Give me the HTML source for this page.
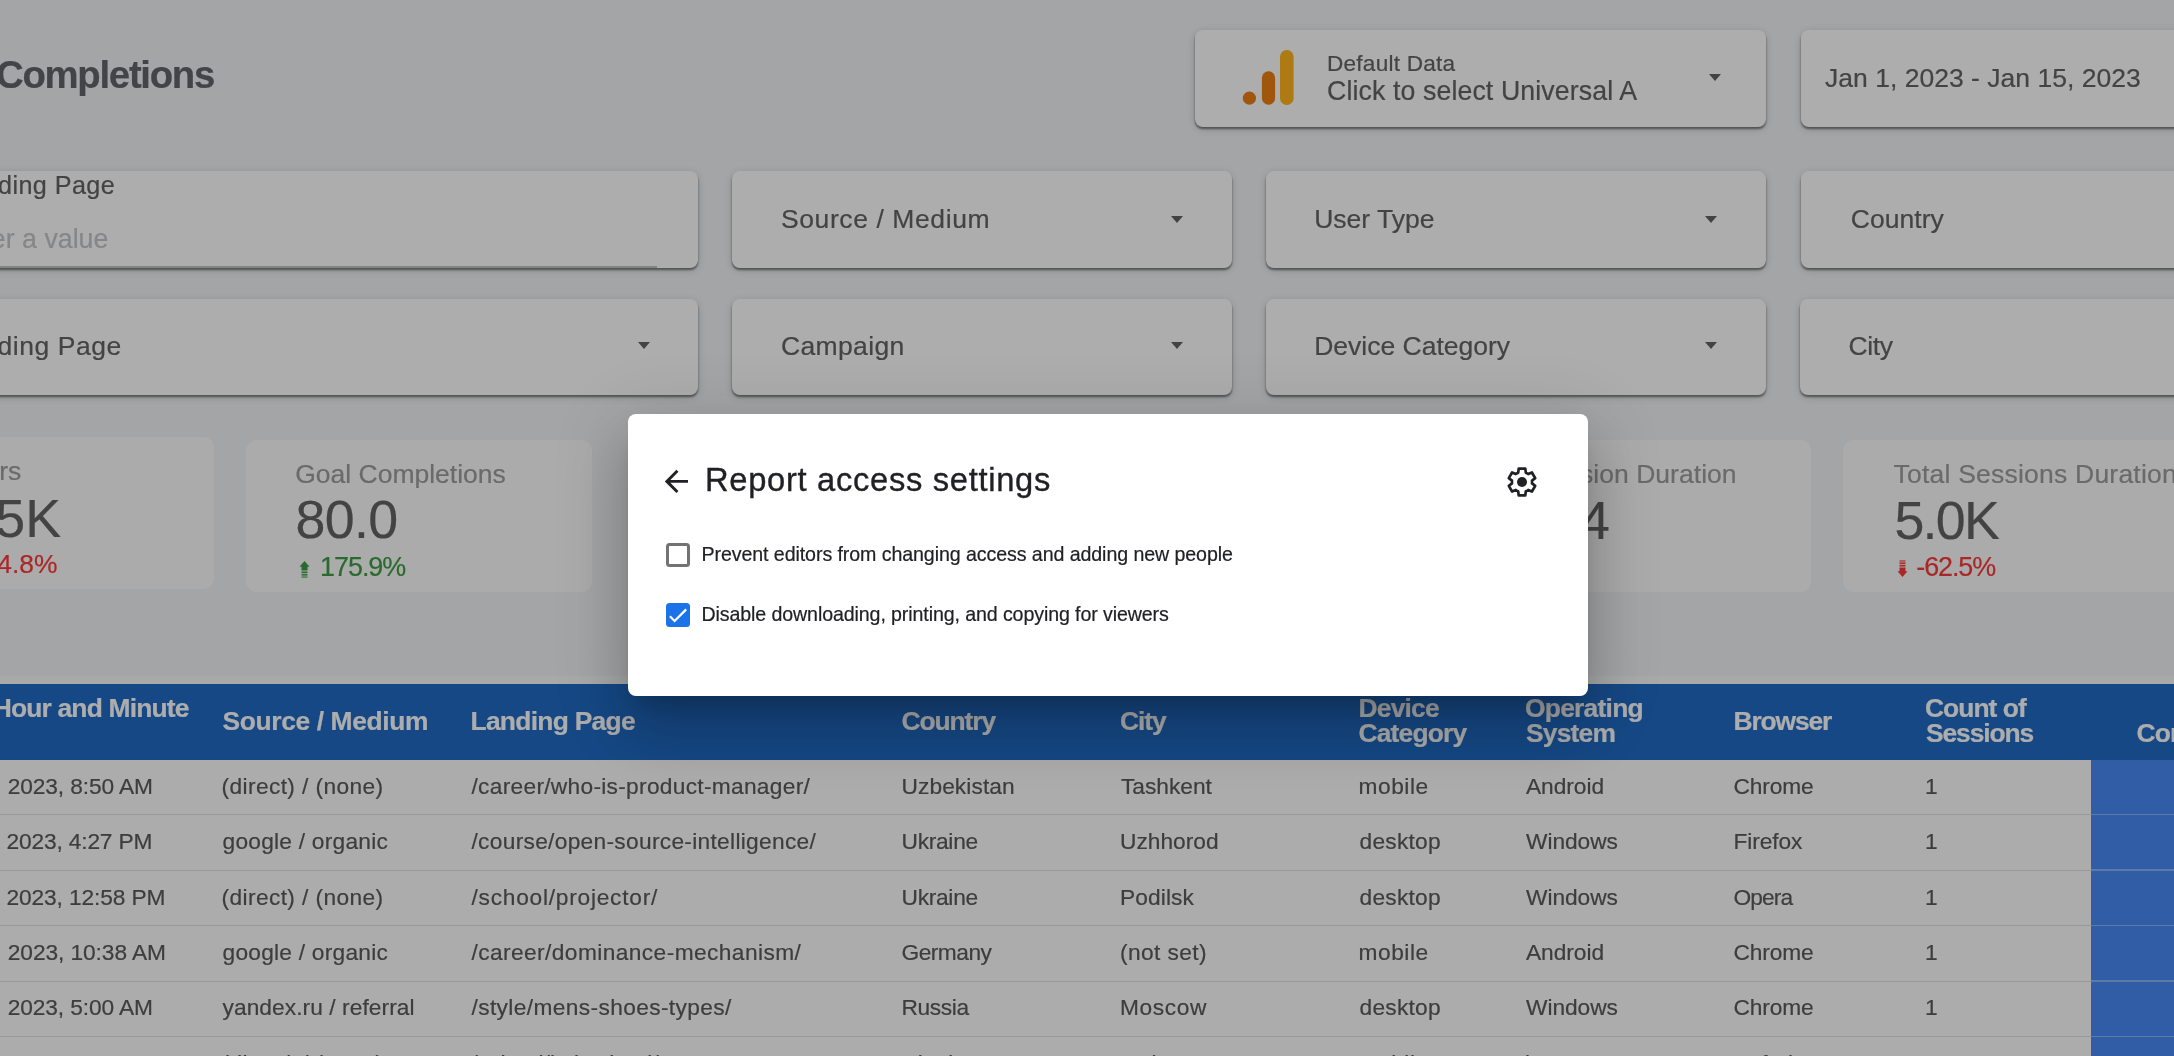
<!DOCTYPE html>
<html lang="en">
<head>
<meta charset="utf-8">
<title>Report access settings</title>
<style>
html,body{margin:0;padding:0;}
body{width:2174px;height:1056px;overflow:hidden;position:relative;background:#f2f4f6;font-family:"Liberation Sans", sans-serif;}
#page,#scrim,#dlgwrap{position:absolute;left:0;top:0;width:2174px;height:1056px;overflow:hidden;}
#page,#dlgwrap{will-change:transform;}
#scrim{background:rgba(0,0,0,0.32);}
.t{position:absolute;white-space:pre;display:block;-webkit-text-stroke:0.2px currentColor;}
.card{position:absolute;background:#ffffff;border-radius:8px;box-shadow:0 2.5px 2px -.5px rgba(0,0,0,.32),0 2px 3px 0 rgba(0,0,0,.2),0 2px 10px 0 rgba(0,0,0,.16);}
.kpi{position:absolute;background:#fdfdfd;border-radius:11px;}
.dd{position:absolute;width:0;height:0;border-left:6.6px solid transparent;border-right:6.6px solid transparent;border-top:7.2px solid #646464;}
.sep{position:absolute;left:0;width:2174px;height:1px;background:#e2e2e2;}
#tbl{position:absolute;left:-40px;top:676px;width:2300px;height:500px;background:linear-gradient(#f8f9f9 0,#f8f9f9 8.5px,#fefefe 8.5px);}
#thead{position:absolute;left:0;top:684.25px;width:2174px;height:75.25px;background:#1f6bc4;}
#barcol{position:absolute;left:2091.3px;top:759.5px;width:100px;height:300px;background:#4889f5;}
.bsep{position:absolute;left:2091.3px;width:100px;height:1.5px;background:#8db4f7;}
#dialog{position:absolute;left:628px;top:414.25px;width:960px;height:281.5px;background:#fff;border-radius:8px;
 box-shadow:0 16.5px 22.5px -10.5px rgba(0,0,0,.2),0 36px 57px 4.5px rgba(0,0,0,.14),0 13.5px 69px 12px rgba(0,0,0,.12);}
.cb{position:absolute;box-sizing:border-box;width:24px;height:24px;border-radius:3.5px;}
</style>
</head>
<body>
<div id="page">
  <!-- top controls -->
  <div class="card" style="left:1194.5px;top:29.5px;width:571px;height:97.5px"></div>
  <div class="card" style="left:1800.75px;top:29.5px;width:500px;height:97.5px"></div>
  <!-- GA icon -->
  <svg style="position:absolute;left:1236px;top:44px" width="64" height="66" viewBox="0 0 64 66">
    <circle cx="13.4" cy="54.2" r="6.6" fill="#ee7f14"/>
    <rect x="25.9" y="27.2" width="13.2" height="33.6" rx="6.6" fill="#ee7f14"/>
    <rect x="44" y="6" width="13.6" height="55" rx="6.8" fill="#ffb41e"/>
  </svg>
  <div class="dd" style="left:1709.2px;top:74.3px"></div>

  <!-- filter row 1 -->
  <div class="card" style="left:-302px;top:170.5px;width:1000px;height:97.5px"></div>
  <div style="position:absolute;left:0;top:266px;width:656.5px;height:2px;background:#c2c2c2"></div>
  <div class="card" style="left:732px;top:170.5px;width:500px;height:97.5px"></div>
  <div class="card" style="left:1266px;top:170.5px;width:500px;height:97.5px"></div>
  <div class="card" style="left:1800.5px;top:170.5px;width:500px;height:97.5px"></div>
  <div class="dd" style="left:1171px;top:215.5px"></div>
  <div class="dd" style="left:1705px;top:215.5px"></div>
  <!-- filter row 2 -->
  <div class="card" style="left:-302px;top:298.75px;width:1000px;height:96.5px"></div>
  <div class="card" style="left:732px;top:298.75px;width:500px;height:96.5px"></div>
  <div class="card" style="left:1266px;top:298.75px;width:500px;height:96.5px"></div>
  <div class="card" style="left:1800px;top:298.75px;width:500px;height:96.5px"></div>
  <div class="dd" style="left:637.8px;top:342px"></div>
  <div class="dd" style="left:1171px;top:342px"></div>
  <div class="dd" style="left:1705px;top:342px"></div>

  <!-- KPI cards -->
  <div class="kpi" style="left:-150px;top:437px;width:364px;height:152px"></div>
  <div class="kpi" style="left:245.75px;top:439.5px;width:346px;height:152px"></div>
  <div class="kpi" style="left:1465px;top:440px;width:346px;height:152px"></div>
  <div class="kpi" style="left:1843px;top:440px;width:346px;height:152px"></div>
  <!-- up arrow -->
  <svg style="position:absolute;left:298px;top:560px" width="13" height="19" viewBox="0 0 13 19">
    <g fill="#3e9c44"><path d="M6.5 1 L11.5 6.7 H9.5 V10.6 H3.5 V6.7 H1.5 Z"/><rect x="3.5" y="11.5" width="6" height="1.7"/><rect x="3.5" y="14.1" width="6" height="1.5"/><rect x="3.5" y="16.5" width="6" height="1.1"/></g>
  </svg>
  <!-- down arrow -->
  <svg style="position:absolute;left:1895.5px;top:559px" width="13" height="19" viewBox="0 0 13 19">
    <g fill="#fa3a3a" transform="translate(0 19) scale(1 -1)"><path d="M6.5 1 L11.5 6.7 H9.5 V10.6 H3.5 V6.7 H1.5 Z"/><rect x="3.5" y="11.5" width="6" height="1.7"/><rect x="3.5" y="14.1" width="6" height="1.5"/><rect x="3.5" y="16.5" width="6" height="1.1"/></g>
  </svg>

  <!-- table -->
  <div id="tbl"></div>
  <div id="thead"></div>
  <div class="sep" style="top:814.45px"></div>
<div class="sep" style="top:869.90px"></div>
<div class="sep" style="top:925.35px"></div>
<div class="sep" style="top:980.80px"></div>
<div class="sep" style="top:1036.25px"></div>
<div class="sep" style="top:1091.70px"></div>
  <div id="barcol"></div>
  <div class="bsep" style="top:813.7px"></div>
  <div class="bsep" style="top:869.1px"></div>
  <div class="bsep" style="top:924.6px"></div>
  <div class="bsep" style="top:980px"></div>
  <div class="bsep" style="top:1035.5px"></div>

<span class="t" style="top:50.75px;font-size:38.34px;line-height:47px;color:#62656a;font-weight:700;left:-4.00px;letter-spacing:-1.279px;">Completions</span>
<span class="t" style="top:49.00px;font-size:22.62px;line-height:29px;color:#646464;left:1327.00px;letter-spacing:0.218px;">Default Data</span>
<span class="t" style="top:74.25px;font-size:26.73px;line-height:34px;color:#646464;left:1327.00px;letter-spacing:0.105px;">Click to select Universal A</span>
<span class="t" style="top:60.50px;font-size:26.52px;line-height:34px;color:#646464;left:1825.00px;letter-spacing:0.011px;">Jan 1, 2023 - Jan 15, 2023</span>
<span class="t" style="top:169.25px;font-size:25.19px;line-height:32px;color:#646464;right:2058.83px;letter-spacing:0.414px;">Landing Page</span>
<span class="t" style="top:221.75px;font-size:26.73px;line-height:34px;color:#c4c6c9;right:2065.62px;letter-spacing:0.022px;">Enter a value</span>
<span class="t" style="top:201.85px;font-size:26.52px;line-height:34px;color:#646464;left:781.00px;letter-spacing:0.583px;">Source / Medium</span>
<span class="t" style="top:201.85px;font-size:26.52px;line-height:34px;color:#646464;left:1314.20px;">User Type</span>
<span class="t" style="top:201.85px;font-size:26.52px;line-height:34px;color:#646464;left:1850.80px;letter-spacing:0.019px;">Country</span>
<span class="t" style="top:329.35px;font-size:26.52px;line-height:34px;color:#646464;right:2052.21px;letter-spacing:0.540px;">Landing Page</span>
<span class="t" style="top:329.35px;font-size:26.52px;line-height:34px;color:#646464;left:781.00px;letter-spacing:0.341px;">Campaign</span>
<span class="t" style="top:329.35px;font-size:26.52px;line-height:34px;color:#646464;left:1314.20px;letter-spacing:-0.011px;">Device Category</span>
<span class="t" style="top:329.35px;font-size:26.52px;line-height:34px;color:#646464;left:1848.50px;letter-spacing:-0.386px;">City</span>
<span class="t" style="top:453.75px;font-size:26.52px;line-height:34px;color:#9c9c9c;right:2152.72px;letter-spacing:0.021px;">Users</span>
<span class="t" style="top:485.65px;font-size:53.76px;line-height:64px;color:#646464;right:2112.81px;letter-spacing:0.043px;">1.5K</span>
<span class="t" style="top:546.65px;font-size:26.42px;line-height:34px;color:#fa3a3a;right:2116.50px;letter-spacing:0.021px;">-4.8%</span>
<span class="t" style="top:456.55px;font-size:26.52px;line-height:34px;color:#9c9c9c;left:295.25px;letter-spacing:-0.016px;">Goal Completions</span>
<span class="t" style="top:487.45px;font-size:53.76px;line-height:64px;color:#646464;left:295.50px;letter-spacing:-0.657px;">80.0</span>
<span class="t" style="top:549.85px;font-size:26.93px;line-height:34px;color:#3e9c44;left:320.00px;letter-spacing:-1.014px;">175.9%</span>
<span class="t" style="top:456.65px;font-size:26.52px;line-height:34px;color:#9c9c9c;right:437.43px;letter-spacing:0.021px;">Avg. Session Duration</span>
<span class="t" style="top:487.85px;font-size:53.76px;line-height:64px;color:#646464;right:564.06px;letter-spacing:0.043px;">00:00:34</span>
<span class="t" style="top:456.65px;font-size:26.52px;line-height:34px;color:#9c9c9c;left:1893.60px;letter-spacing:0.209px;">Total Sessions Duration</span>
<span class="t" style="top:487.85px;font-size:53.76px;line-height:64px;color:#646464;left:1894.40px;letter-spacing:-1.707px;">5.0K</span>
<span class="t" style="top:550.15px;font-size:26.93px;line-height:34px;color:#fa3a3a;left:1916.30px;letter-spacing:-1.093px;">-62.5%</span>
<span class="t" style="top:690.85px;font-size:26.42px;line-height:34px;color:#ffffff;font-weight:700;right:1985.39px;letter-spacing:-0.824px;">Date Hour and Minute</span>
<span class="t" style="top:703.95px;font-size:26.42px;line-height:34px;color:#ffffff;font-weight:700;left:222.50px;letter-spacing:-0.379px;">Source / Medium</span>
<span class="t" style="top:703.95px;font-size:26.42px;line-height:34px;color:#ffffff;font-weight:700;left:470.50px;letter-spacing:-0.722px;">Landing Page</span>
<span class="t" style="top:703.95px;font-size:26.42px;line-height:34px;color:#ffffff;font-weight:700;left:901.50px;letter-spacing:-1.088px;">Country</span>
<span class="t" style="top:703.95px;font-size:26.42px;line-height:34px;color:#ffffff;font-weight:700;left:1120.00px;letter-spacing:-1.067px;">City</span>
<span class="t" style="top:690.85px;font-size:26.42px;line-height:34px;color:#ffffff;font-weight:700;left:1358.50px;letter-spacing:-0.793px;">Device</span>
<span class="t" style="top:716.35px;font-size:26.42px;line-height:34px;color:#ffffff;font-weight:700;left:1358.50px;letter-spacing:-0.824px;">Category</span>
<span class="t" style="top:690.85px;font-size:26.42px;line-height:34px;color:#ffffff;font-weight:700;left:1525.00px;letter-spacing:-0.760px;">Operating</span>
<span class="t" style="top:716.35px;font-size:26.42px;line-height:34px;color:#ffffff;font-weight:700;left:1526.00px;letter-spacing:-0.793px;">System</span>
<span class="t" style="top:703.95px;font-size:26.42px;line-height:34px;color:#ffffff;font-weight:700;left:1733.50px;letter-spacing:-1.148px;">Browser</span>
<span class="t" style="top:690.85px;font-size:26.42px;line-height:34px;color:#ffffff;font-weight:700;left:1925.00px;letter-spacing:-0.960px;">Count of</span>
<span class="t" style="top:716.35px;font-size:26.42px;line-height:34px;color:#ffffff;font-weight:700;left:1926.00px;letter-spacing:-1.110px;">Sessions</span>
<span class="t" style="top:716.35px;font-size:26.42px;line-height:34px;color:#ffffff;font-weight:700;left:2136.50px;letter-spacing:-0.824px;">Completions</span>
<span class="t" style="top:770.65px;font-size:22.72px;line-height:30px;color:#5a5a5a;right:2021.19px;letter-spacing:-0.112px;">Jan 1, 2023, 8:50 AM</span>
<span class="t" style="top:770.65px;font-size:22.72px;line-height:30px;color:#5a5a5a;left:221.50px;letter-spacing:0.392px;">(direct) / (none)</span>
<span class="t" style="top:770.65px;font-size:22.72px;line-height:30px;color:#5a5a5a;left:471.50px;letter-spacing:0.292px;">/career/who-is-product-manager/</span>
<span class="t" style="top:770.65px;font-size:22.72px;line-height:30px;color:#5a5a5a;left:901.50px;letter-spacing:0.083px;">Uzbekistan</span>
<span class="t" style="top:770.65px;font-size:22.72px;line-height:30px;color:#5a5a5a;left:1121.00px;letter-spacing:-0.017px;">Tashkent</span>
<span class="t" style="top:770.65px;font-size:22.72px;line-height:30px;color:#5a5a5a;left:1358.50px;letter-spacing:0.542px;">mobile</span>
<span class="t" style="top:770.65px;font-size:22.72px;line-height:30px;color:#5a5a5a;left:1526.00px;letter-spacing:-0.029px;">Android</span>
<span class="t" style="top:770.65px;font-size:22.72px;line-height:30px;color:#5a5a5a;left:1733.50px;letter-spacing:-0.133px;">Chrome</span>
<span class="t" style="top:770.65px;font-size:22.72px;line-height:30px;color:#5a5a5a;left:1925.00px;">1</span>
<span class="t" style="top:826.10px;font-size:22.72px;line-height:30px;color:#5a5a5a;right:2021.73px;letter-spacing:-0.154px;">Jan 1, 2023, 4:27 PM</span>
<span class="t" style="top:826.10px;font-size:22.72px;line-height:30px;color:#5a5a5a;left:222.50px;letter-spacing:0.246px;">google / organic</span>
<span class="t" style="top:826.10px;font-size:22.72px;line-height:30px;color:#5a5a5a;left:471.50px;letter-spacing:0.302px;">/course/open-source-intelligence/</span>
<span class="t" style="top:826.10px;font-size:22.72px;line-height:30px;color:#5a5a5a;left:901.50px;letter-spacing:-0.275px;">Ukraine</span>
<span class="t" style="top:826.10px;font-size:22.72px;line-height:30px;color:#5a5a5a;left:1120.00px;letter-spacing:0.018px;">Uzhhorod</span>
<span class="t" style="top:826.10px;font-size:22.72px;line-height:30px;color:#5a5a5a;left:1359.50px;letter-spacing:0.261px;">desktop</span>
<span class="t" style="top:826.10px;font-size:22.72px;line-height:30px;color:#5a5a5a;left:1526.00px;letter-spacing:-0.050px;">Windows</span>
<span class="t" style="top:826.10px;font-size:22.72px;line-height:30px;color:#5a5a5a;left:1733.50px;letter-spacing:-0.095px;">Firefox</span>
<span class="t" style="top:826.10px;font-size:22.72px;line-height:30px;color:#5a5a5a;left:1925.00px;">1</span>
<span class="t" style="top:881.55px;font-size:22.72px;line-height:30px;color:#5a5a5a;right:2008.69px;letter-spacing:-0.114px;">Jan 1, 2023, 12:58 PM</span>
<span class="t" style="top:881.55px;font-size:22.72px;line-height:30px;color:#5a5a5a;left:221.50px;letter-spacing:0.392px;">(direct) / (none)</span>
<span class="t" style="top:881.55px;font-size:22.72px;line-height:30px;color:#5a5a5a;left:471.50px;letter-spacing:0.754px;">/school/projector/</span>
<span class="t" style="top:881.55px;font-size:22.72px;line-height:30px;color:#5a5a5a;left:901.50px;letter-spacing:-0.275px;">Ukraine</span>
<span class="t" style="top:881.55px;font-size:22.72px;line-height:30px;color:#5a5a5a;left:1120.00px;letter-spacing:0.104px;">Podilsk</span>
<span class="t" style="top:881.55px;font-size:22.72px;line-height:30px;color:#5a5a5a;left:1359.50px;letter-spacing:0.261px;">desktop</span>
<span class="t" style="top:881.55px;font-size:22.72px;line-height:30px;color:#5a5a5a;left:1526.00px;letter-spacing:-0.050px;">Windows</span>
<span class="t" style="top:881.55px;font-size:22.72px;line-height:30px;color:#5a5a5a;left:1733.50px;letter-spacing:-0.877px;">Opera</span>
<span class="t" style="top:881.55px;font-size:22.72px;line-height:30px;color:#5a5a5a;left:1925.00px;">1</span>
<span class="t" style="top:937.00px;font-size:22.72px;line-height:30px;color:#5a5a5a;right:2008.15px;letter-spacing:-0.076px;">Jan 1, 2023, 10:38 AM</span>
<span class="t" style="top:937.00px;font-size:22.72px;line-height:30px;color:#5a5a5a;left:222.50px;letter-spacing:0.246px;">google / organic</span>
<span class="t" style="top:937.00px;font-size:22.72px;line-height:30px;color:#5a5a5a;left:471.50px;letter-spacing:0.412px;">/career/dominance-mechanism/</span>
<span class="t" style="top:937.00px;font-size:22.72px;line-height:30px;color:#5a5a5a;left:901.50px;letter-spacing:-0.511px;">Germany</span>
<span class="t" style="top:937.00px;font-size:22.72px;line-height:30px;color:#5a5a5a;left:1120.00px;letter-spacing:0.404px;">(not set)</span>
<span class="t" style="top:937.00px;font-size:22.72px;line-height:30px;color:#5a5a5a;left:1358.50px;letter-spacing:0.542px;">mobile</span>
<span class="t" style="top:937.00px;font-size:22.72px;line-height:30px;color:#5a5a5a;left:1526.00px;letter-spacing:-0.029px;">Android</span>
<span class="t" style="top:937.00px;font-size:22.72px;line-height:30px;color:#5a5a5a;left:1733.50px;letter-spacing:-0.133px;">Chrome</span>
<span class="t" style="top:937.00px;font-size:22.72px;line-height:30px;color:#5a5a5a;left:1925.00px;">1</span>
<span class="t" style="top:992.45px;font-size:22.72px;line-height:30px;color:#5a5a5a;right:2021.19px;letter-spacing:-0.112px;">Jan 1, 2023, 5:00 AM</span>
<span class="t" style="top:992.45px;font-size:22.72px;line-height:30px;color:#5a5a5a;left:222.50px;letter-spacing:0.073px;">yandex.ru / referral</span>
<span class="t" style="top:992.45px;font-size:22.72px;line-height:30px;color:#5a5a5a;left:471.50px;letter-spacing:0.372px;">/style/mens-shoes-types/</span>
<span class="t" style="top:992.45px;font-size:22.72px;line-height:30px;color:#5a5a5a;left:901.50px;letter-spacing:-0.362px;">Russia</span>
<span class="t" style="top:992.45px;font-size:22.72px;line-height:30px;color:#5a5a5a;left:1120.00px;letter-spacing:0.617px;">Moscow</span>
<span class="t" style="top:992.45px;font-size:22.72px;line-height:30px;color:#5a5a5a;left:1359.50px;letter-spacing:0.261px;">desktop</span>
<span class="t" style="top:992.45px;font-size:22.72px;line-height:30px;color:#5a5a5a;left:1526.00px;letter-spacing:-0.050px;">Windows</span>
<span class="t" style="top:992.45px;font-size:22.72px;line-height:30px;color:#5a5a5a;left:1733.50px;letter-spacing:-0.133px;">Chrome</span>
<span class="t" style="top:992.45px;font-size:22.72px;line-height:30px;color:#5a5a5a;left:1925.00px;">1</span>
<span class="t" style="top:1047.90px;font-size:22.72px;line-height:30px;color:#5a5a5a;right:2021.05px;letter-spacing:0.028px;">Jan 1, 2023, 3:11 AM</span>
<span class="t" style="top:1047.90px;font-size:22.72px;line-height:30px;color:#5a5a5a;left:221.50px;letter-spacing:0.392px;">(direct) / (none)</span>
<span class="t" style="top:1047.90px;font-size:22.72px;line-height:30px;color:#5a5a5a;left:471.50px;letter-spacing:0.018px;">/school/kpi-school/</span>
<span class="t" style="top:1047.90px;font-size:22.72px;line-height:30px;color:#5a5a5a;left:901.50px;letter-spacing:-0.275px;">Ukraine</span>
<span class="t" style="top:1047.90px;font-size:22.72px;line-height:30px;color:#5a5a5a;left:1120.00px;letter-spacing:0.018px;">Malyn</span>
<span class="t" style="top:1047.90px;font-size:22.72px;line-height:30px;color:#5a5a5a;left:1358.50px;letter-spacing:0.542px;">mobile</span>
<span class="t" style="top:1047.90px;font-size:22.72px;line-height:30px;color:#5a5a5a;left:1525.00px;letter-spacing:0.018px;">iOS</span>
<span class="t" style="top:1047.90px;font-size:22.72px;line-height:30px;color:#5a5a5a;left:1733.50px;letter-spacing:0.018px;">Safari</span>
<span class="t" style="top:1047.90px;font-size:22.72px;line-height:30px;color:#5a5a5a;left:1925.00px;">1</span>
</div>

<div id="scrim"></div>

<div id="dlgwrap">
  <div id="dialog"></div>
  <!-- back arrow -->
  <svg style="position:absolute;left:658.8px;top:464.2px" width="34.8" height="34.8" viewBox="0 0 24 24"><path fill="#202124" d="M20 11H7.83l5.59-5.59L12 4l-8 8 8 8 1.41-1.41L7.83 13H20v-2z"/></svg>
  <!-- gear -->
  <svg style="position:absolute;left:1503.85px;top:463.95px" width="36" height="36" viewBox="0 0 36 36">
    <path d="M14.20 8.64L14.70 4.65L21.30 4.65L21.80 8.64A10.1 10.1 0 0 1 24.20 10.03L27.91 8.47L31.21 14.18L28.00 16.61A10.1 10.1 0 0 1 28.00 19.39L31.21 21.82L27.91 27.53L24.20 25.97A10.1 10.1 0 0 1 21.80 27.36L21.30 31.35L14.70 31.35L14.20 27.36A10.1 10.1 0 0 1 11.80 25.97L8.09 27.53L4.79 21.82L8.00 19.39A10.1 10.1 0 0 1 8.00 16.61L4.79 14.18L8.09 8.47L11.80 10.03A10.1 10.1 0 0 1 14.20 8.64Z" fill="none" stroke="#202124" stroke-width="2.7" stroke-linejoin="round"/>
    <circle cx="18" cy="18" r="5" fill="#202124"/>
  </svg>
  <!-- checkboxes -->
  <div class="cb" style="left:666.2px;top:542.6px;border:3px solid #737373;background:#fff"></div>
  <div class="cb" style="left:666.2px;top:602.6px;background:#1a73e8"></div>
  <svg style="position:absolute;left:666.2px;top:602.6px" width="24" height="24" viewBox="0 0 24 24"><path d="M3.9 13.2 L8.6 18 L20.2 6.4" fill="none" stroke="#fff" stroke-width="2.2"/></svg>
<span class="t" style="top:458.85px;font-size:32.69px;line-height:41px;color:#202124;left:705.00px;letter-spacing:0.706px;-webkit-text-stroke:0.35px #202124;">Report access settings</span>
<span class="t" style="top:541.00px;font-size:19.63px;line-height:26px;color:#202124;left:701.50px;letter-spacing:-0.086px;">Prevent editors from changing access and adding new people</span>
<span class="t" style="top:601.00px;font-size:19.63px;line-height:26px;color:#202124;left:701.50px;letter-spacing:-0.109px;">Disable downloading, printing, and copying for viewers</span>
</div>
</body>
</html>
